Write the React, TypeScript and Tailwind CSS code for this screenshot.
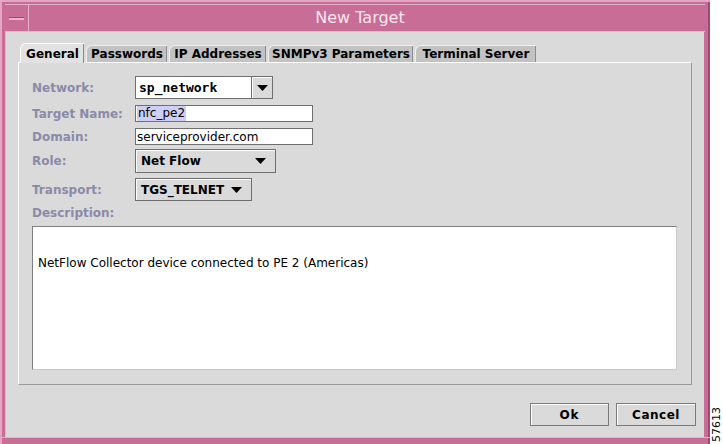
import React from 'react';

const sans = "font-['DejaVu_Sans','Liberation_Sans',sans-serif]";
const mono = "font-['DejaVu_Sans_Mono','Liberation_Mono',monospace]";

const tabs = [
  { label: 'General', w: 'w-[64px]' },
  { label: 'Passwords', w: 'w-[81px]' },
  { label: 'IP Addresses', w: 'w-[97px]' },
  { label: 'SNMPv3 Parameters', w: 'w-[145px]' },
  { label: 'Terminal Server', w: 'w-[121px]' },
];

function Arrow() {
  return (
    <svg width="11" height="6" viewBox="0 0 11 6">
      <polygon points="0,0 11,0 5.5,6" fill="#000" />
    </svg>
  );
}

function Label({ children }: { children: React.ReactNode }) {
  return <div className={`w-[103px] shrink-0 text-[12px] font-bold text-[#8a8aa8] ${sans}`}>{children}</div>;
}

// combo sin editor: fondo gris con borde 3D
function Combo({ text, w }: { text: string; w: string }) {
  return (
    <div className={`${w} h-full flex items-center justify-between border border-[#6f6f6f] bg-[#dadada] shadow-[inset_1px_1px_0_#fff] pl-[5px] pr-[9px]`}>
      <span className={`text-[12px] font-bold text-black ${sans}`}>{text}</span>
      <Arrow />
    </div>
  );
}

export default function App() {
  return (
    <div className="w-[723px] h-[444px] bg-white flex overflow-hidden">
      {/* ventana */}
      <div className="w-[710px] h-[444px] bg-[#c86e96] border-l-2 border-t-2 border-[#e4a6c2] flex flex-col shrink-0 shadow-[inset_-2px_0_0_#9c4b72]">
        <div className="h-[28px] flex border-b border-[#e7b3ca] ml-[3px] mr-[5px] mt-[2px] border-t border-[#e7b3ca]">
          <div className="w-[24px] h-full border-r border-[#e7b3ca] flex items-center justify-center">
            <div className="w-[15px] h-[3px] bg-[#e7b3ca] border-t border-[#9c4b72]" />
          </div>
          <div className={`flex-1 flex items-center justify-center text-[16px] text-[#fbe6ef] ${sans} pr-[14px]`}>New Target</div>
        </div>

        {/* contenido */}
        <div className="flex-1 ml-[3px] mr-[6px] bg-[#dadada] flex flex-col px-[12px] pt-[11px] border-l border-[#e7b3ca]">
          {/* pestañas */}
          <div className="flex items-end gap-[2px] pl-[2px] h-[19px]">
            {tabs.map((t, i) => (
              <div
                key={t.label}
                className={`${t.w} ${i === 0 ? 'h-[20px] bg-[#e2e2e2] border-[#fff] -mb-px z-10' : 'h-[17px] bg-[#c2c2c2] border-[#f0f0f0]'} border-l border-t rounded-tl-[6px] shadow-[inset_-1px_0_0_#8c8c8c] flex items-center justify-center text-[12px] font-bold text-black ${sans}`}
              >
                {t.label}
              </div>
            ))}
          </div>

          {/* panel */}
          <div className="h-[323px] border-l border-t border-white border-r border-b border-r-[#9a9a9a] border-b-[#9a9a9a] flex flex-col px-[13px]">
            <div className="mt-[13px] h-[23px] flex items-center">
              <Label>Network:</Label>
              <div className="h-full flex">
                <div className="w-[117px] h-full bg-white border border-[#6f6f6f] flex items-center pl-[3px]">
                  <span className={`text-[13px] font-bold text-black ${mono}`}>sp_network</span>
                </div>
                <div className="w-[21px] h-full bg-[#dadada] border border-l-0 border-[#6f6f6f] shadow-[inset_1px_1px_0_#fff] flex items-center justify-center">
                  <Arrow />
                </div>
              </div>
            </div>

            <div className="mt-[6px] h-[17px] flex items-center">
              <Label>Target Name:</Label>
              <div className="w-[178px] h-full bg-white border border-[#6f6f6f] flex items-center pl-[1px]">
                <span className={`bg-[#cfcff5] px-[1px] text-[12px] leading-[15px] text-black ${sans}`}>nfc_pe2</span>
              </div>
            </div>

            <div className="mt-[6px] h-[17px] flex items-center">
              <Label>Domain:</Label>
              <div className="w-[178px] h-full bg-white border border-[#6f6f6f] flex items-center pl-[1px]">
                <span className={`text-[12px] text-black ${sans}`}>serviceprovider.com</span>
              </div>
            </div>

            <div className="mt-[4px] h-[24px] flex items-center">
              <Label>Role:</Label>
              <Combo text="Net Flow" w="w-[141px]" />
            </div>

            <div className="mt-[5px] h-[23px] flex items-center">
              <Label>Transport:</Label>
              <Combo text="TGS_TELNET" w="w-[117px]" />
            </div>

            <div className="mt-[4px] h-[16px] flex items-center">
              <Label>Description:</Label>
            </div>

            <div className="mt-[5px] h-[144px] mr-[1px] bg-white border border-[#808080] border-r-[#c8c8c8] border-b-[#c8c8c8] pt-[22px] pl-[5px]">
              <span className={`text-[12px] text-black ${sans}`}>NetFlow Collector device connected to PE 2 (Americas)</span>
            </div>
          </div>

          {/* botones */}
          <div className="flex justify-end gap-[7px] mt-[18px] mr-[-4px]">
            <button className={`w-[79px] h-[23px] border border-[#7a7a7a] bg-[#dadada] shadow-[inset_1px_1px_0_#fff] text-[12px] font-bold tracking-[1px] text-black ${sans}`}>Ok</button>
            <button className={`w-[80px] h-[23px] border border-[#7a7a7a] bg-[#dadada] shadow-[inset_1px_1px_0_#fff] text-[12px] font-bold tracking-[0.5px] text-black ${sans}`}>Cancel</button>
          </div>
        </div>
        <div className="h-[7px] border-t border-[#e7b3ca]" />
      </div>

      {/* número de figura */}
      <div className="flex-1 flex flex-col justify-end items-center pb-[2px]">
        <span className={`[writing-mode:vertical-rl] rotate-180 text-[11px] leading-[11px] text-black ${sans}`}>57613</span>
      </div>
    </div>
  );
}
